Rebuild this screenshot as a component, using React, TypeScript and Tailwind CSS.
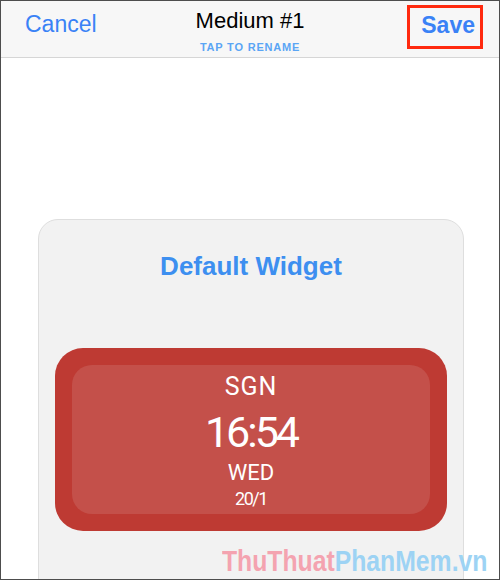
export default function App() {
  return (
    <div className="relative w-[500px] h-[580px] overflow-hidden border border-[#4d4d4d] bg-white font-['Liberation_Sans',Arial,sans-serif]">
      {/* nav bar */}
      <div className="grid h-[57px] grid-cols-[1fr_auto_1fr] items-start border-b border-[#d6d6d6] bg-[#f7f7f7]">
        <div className="pl-[24px] pt-[9px] text-[23px] leading-[28px] text-[#3a82f6]">Cancel</div>
        <div className="flex flex-col items-center pt-[6px]">
          <div className="text-[22px] leading-[28px] text-black">Medium #1</div>
          <div className="mt-[6px] text-[11px] leading-[12px] font-bold tracking-[0.8px] text-[#5aa5f5]">TAP TO RENAME</div>
        </div>
        <div className="flex justify-end pr-[16px] pt-[4px]">
          <div className="border-[3px] border-[#ff2a0f] pl-[11px] pr-[5px] h-[44px] text-[23px] leading-[34px] font-bold text-[#3a82f6]">
            Save
          </div>
        </div>
      </div>

      {/* widget preview card */}
      <div className="ml-[37px] mt-[161px] w-[426px] h-[400px] rounded-[20px] border border-[#dedede] bg-[#f2f2f2] pt-[30px]">
        <div className="text-center text-[26px] leading-[32px] font-bold text-[#3d8ff0]">Default Widget</div>
        <div className="mx-[16px] mt-[66px] h-[183px] rounded-[28px] bg-[#be3a33] p-[17px]">
          <div className="flex h-full flex-col items-center rounded-[20px] bg-[#c4504a] pt-[8px] font-['Roboto',sans-serif] text-white">
            <div className="text-[25px] leading-[28px] tracking-[1px]">SGN</div>
            <div className="mt-[9px] text-[43px] leading-[44px] tracking-[-3px]">16:54</div>
            <div className="mt-[7px] text-[22px] leading-[24px]">WED</div>
            <div className="mt-[4px] text-[18px] leading-[20px] tracking-[-1.5px]">20/1</div>
          </div>
        </div>
      </div>

      {/* watermark */}
      <div className="absolute left-[221px] top-[543px] origin-left scale-x-[0.825] whitespace-nowrap text-[30px] leading-[34px] font-bold">
        <span className="text-[#f4a3b0]">ThuThuat</span>
        <span className="text-[#9dd3f4]">PhanMem.vn</span>
      </div>
    </div>
  );
}
